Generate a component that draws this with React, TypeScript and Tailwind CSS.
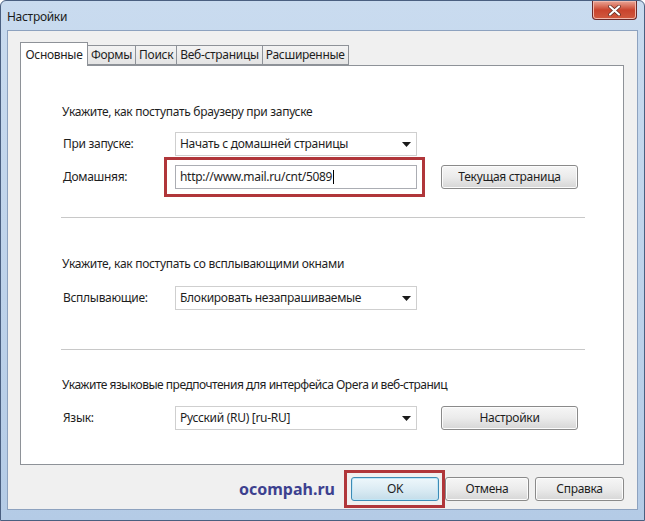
import React from "react";

const font = { fontFamily: '"Noto Sans", "Open Sans", sans-serif' };

function Arrow() {
  return (
    <svg width="9" height="5" viewBox="0 0 9 5" className="block">
      <path d="M0 0 H9 L4.5 5 Z" fill="#1a1a1a" />
    </svg>
  );
}

function Select({ text }: { text: string }) {
  return (
    <div className="w-[242px] h-[24px] bg-white border border-[#cfcfcf] flex items-center pl-[4px] pr-[5px] text-[12px] text-[#1e1e1e]">
      <span className="flex-1 truncate">{text}</span>
      <Arrow />
    </div>
  );
}

function Btn({ children, w, focus }: { children: React.ReactNode; w: string; focus?: boolean }) {
  return (
    <div
      className={
        "h-[24px] flex items-center justify-center text-[12px] text-[#1e1e1e] rounded-[3px] border " +
        w +
        " " +
        (focus
          ? "border-[#3c8bb5] bg-gradient-to-b from-[#eef7fb] via-[#dcecf4] to-[#c4dde9] shadow-[inset_0_0_0_1px_#bfe6f7]"
          : "border-[#8a8a8a] bg-gradient-to-b from-[#f6f6f6] via-[#ebebeb] to-[#d6d6d6] shadow-[inset_0_0_0_1px_#fcfcfc]")
      }
    >
      {children}
    </div>
  );
}

function Row({ label, children }: { label: string; children: React.ReactNode }) {
  return (
    <div className="flex items-center">
      <div className="w-[112px] text-[12px] text-[#1e1e1e]">{label}</div>
      {children}
    </div>
  );
}

export default function App() {
  const tabs = ["Формы", "Поиск", "Веб-страницы", "Расширенные"];
  return (
    <div style={font} className="w-[645px] h-[521px] overflow-hidden flex flex-col bg-gradient-to-b from-[#c9dbef] to-[#b4cbe6] border border-[#4a5f80] rounded-t-[6px] tracking-[-0.3px]">
      {/* title bar */}
      <div className="h-[29px] flex items-start relative shrink-0">
        <div className="pl-[6px] pt-[7px] text-[12px] text-[#1b1b1b]">Настройки</div>
        <div className="ml-auto mr-[7px] w-[45px] h-[19px] rounded-b-[4px] border border-t-0 border-[#6b2a2a] bg-gradient-to-b from-[#e9a596] via-[#c9432d] to-[#d0593f] flex items-center justify-center shadow-[inset_0_0_0_1px_#f2b9ad]">
          <svg width="13" height="11" viewBox="0 0 13 11">
            <path d="M2 1.5 L11 9.5 M11 1.5 L2 9.5" stroke="#5a2a22" strokeWidth="3.6" strokeLinecap="round" />
            <path d="M2 1.5 L11 9.5 M11 1.5 L2 9.5" stroke="#ffffff" strokeWidth="2.2" strokeLinecap="round" />
          </svg>
        </div>
      </div>
      {/* client */}
      <div className="flex-1 flex px-[6px]">
        <div className="flex-1 bg-[#f0f0f0] border border-[#8da2bf] flex flex-col pl-[12px] pr-[13px] pt-[11px]">
          {/* tabs */}
          <div className="flex items-end h-[23px] relative z-10">
            <div className="h-[24px] bg-white border border-[#8e9298] border-b-0 px-[4px] flex items-center text-[12px] text-[#1e1e1e] -mb-[1px] w-[68px] justify-center">
              Основные
            </div>
            {tabs.map((t) => (
              <div
                key={t}
                className="h-[20px] bg-gradient-to-b from-[#f3f3f3] to-[#e4e4e4] border border-l-0 border-[#8e9298] px-[3px] flex items-center text-[12px] text-[#1e1e1e]"
              >
                {t}
              </div>
            ))}
          </div>
          {/* panel */}
          <div className="h-[400px] bg-white border border-[#8e9298] pl-[41px] pr-[39px]">
            <div className="pt-[37px] text-[12px] text-[#1e1e1e]">Укажите, как поступать браузеру при запуске</div>
            <div className="mt-[11px] pl-[1px] flex flex-col gap-[9px]">
              <Row label="При запуске:">
                <Select text="Начать с домашней страницы" />
              </Row>
              <Row label="Домашняя:">
                <div className="relative">
                  <div className="w-[242px] h-[24px] bg-white border border-[#abadb3] flex items-center pl-[4px] text-[12px] text-[#1e1e1e]">
                    http://www.mail.ru/cnt/5089<span className="inline-block w-px h-[14px] bg-black ml-[1px]" />
                  </div>
                  <div className="absolute left-[-11px] right-[-8px] top-[-8px] bottom-[-8px] border-[3px] border-[#b0363a] pointer-events-none" />
                </div>
                <div className="ml-[24px]">
                  <Btn w="w-[137px]">Текущая страница</Btn>
                </div>
              </Row>
            </div>
            <div className="mt-[28px] border-t border-[#c8c8c8] -mx-[1px]" />
            <div className="mt-[37px] text-[12px] text-[#1e1e1e]">Укажите, как поступать со всплывающими окнами</div>
            <div className="mt-[13px] pl-[1px]">
              <Row label="Всплывающие:">
                <Select text="Блокировать незапрашиваемые" />
              </Row>
            </div>
            <div className="mt-[39px] border-t border-[#c8c8c8] -mx-[1px]" />
            <div className="mt-[26px] text-[12px] text-[#1e1e1e] tracking-[-0.5px]">Укажите языковые предпочтения для интерфейса Opera и веб-страниц</div>
            <div className="mt-[12px] pl-[1px]">
              <Row label="Язык:">
                <Select text="Русский (RU) [ru-RU]" />
                <div className="ml-[24px]">
                  <Btn w="w-[137px]">Настройки</Btn>
                </div>
              </Row>
            </div>
          </div>
          {/* bottom buttons */}
          <div className="mt-[12px] flex items-center justify-end">
            <div className="mr-[16px] text-[16px] font-bold text-[#3d418f] tracking-[0px]">ocompah.ru</div>
            <div className="relative mr-[6px]">
              <Btn w="w-[88px]" focus>
                OK
              </Btn>
              <div className="absolute left-[-7px] right-[-6px] top-[-7px] bottom-[-7px] border-[3px] border-[#b0363a] pointer-events-none" />
            </div>
            <div className="mr-[6px]">
              <Btn w="w-[84px]">Отмена</Btn>
            </div>
            <Btn w="w-[89px]">Справка</Btn>
          </div>
        </div>
      </div>
      <div className="h-[10px] shrink-0" />
    </div>
  );
}
